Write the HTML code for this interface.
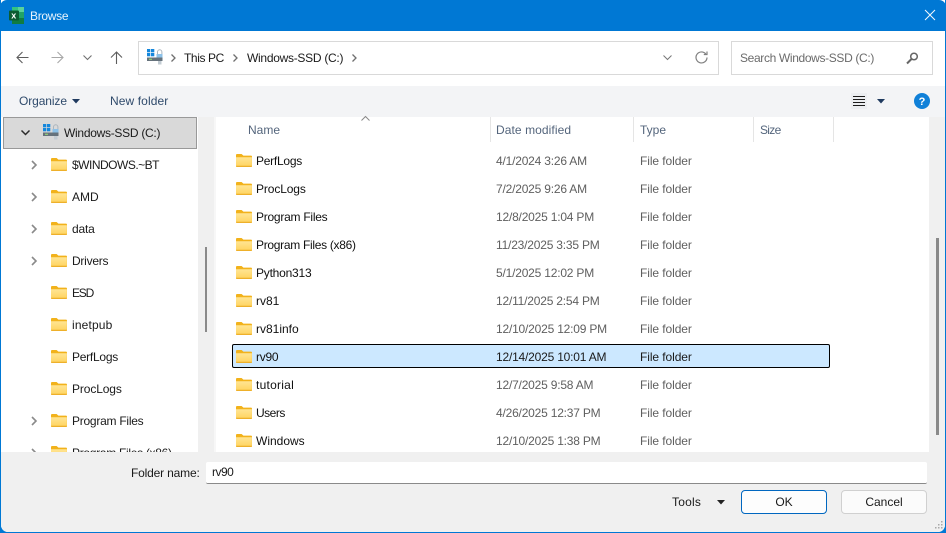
<!DOCTYPE html>
<html><head><meta charset="utf-8"><style>
html,body{margin:0;padding:0;width:946px;height:533px;overflow:hidden;background:#0078d4}
*{box-sizing:border-box}
#w{position:absolute;left:0;top:0;width:946px;height:533px;overflow:hidden;font:12px "Liberation Sans",sans-serif;color:#1a1a1a}
.a,.t,.n,.d,.y{position:absolute}
.t,.n,.d,.y{white-space:nowrap;line-height:16px}
.n{left:256px;color:#101010}
.d{left:496px;color:#5f5f5f;letter-spacing:-.2px}
.y{left:640px;color:#5f5f5f;letter-spacing:-.08px}
.h{color:#54657c}
svg{position:absolute;overflow:visible}
</style></head><body><div id="w">
<svg width="0" height="0" style="position:absolute"><defs>
<linearGradient id="fg" x1="0" y1="0" x2="0" y2="1"><stop offset="0" stop-color="#ffe594"/><stop offset="1" stop-color="#ffd35e"/></linearGradient>
<symbol id="fo" viewBox="0 0 16 14"><path d="M0 2a1 1 0 0 1 1-1h4.600l1.800 1.600H15a1 1 0 0 1 1 1V13a1 1 0 0 1-1 1H1a1 1 0 0 1-1-1z" fill="#f2b21b"/><path d="M0 4.200h15.900V13a1 1 0 0 1-1 .9H1a1 1 0 0 1-1-.9z" fill="url(#fg)"/><path d="M0 12.800h16V13a1 1 0 0 1-1 1H1a1 1 0 0 1-1-1z" fill="#eeb02a"/></symbol>
<symbol id="dr" viewBox="0 0 16 16"><rect x="0" y="0" width="3.300" height="3.300" fill="#1487dc"/><rect x="4" y="0" width="3.300" height="3.300" fill="#1487dc"/><rect x="0" y="4" width="3.300" height="3.300" fill="#1487dc"/><rect x="4" y="4" width="3.300" height="3.300" fill="#1487dc"/><rect x="0" y="8.500" width="15.500" height="3.500" fill="#66727c"/><rect x="2" y="9.700" width="3" height="1.200" fill="#8fd07a"/><path d="M10.500 5.500V3a2.200 2.200 0 0 1 4.400 0v2.500" fill="none" stroke="#aab5be" stroke-width="1"/><rect x="9.500" y="5" width="6" height="3.500" fill="#8cc1e8"/><rect x="11" y="12" width="3.500" height="3.500" fill="#c3ccd3"/></symbol>
<symbol id="ch" viewBox="0 0 8 12"><path d="M2 2l4 4-4 4" fill="none" stroke="#8a8a8a" stroke-width="1.600"/></symbol>
<symbol id="cs" viewBox="0 0 8 12"><path d="M2.500 2.500l3.500 3.500-3.500 3.500" fill="none" stroke="#6f6f6f" stroke-width="1.300"/></symbol>
</defs></svg>

<!-- frame -->
<div class="a" style="left:1px;top:0;width:944px;height:532px;background:#fff;border-radius:0 0 7px 7px"></div>
<div class="a" style="left:0;top:0;width:946px;height:31px;background:#0078d4;border-radius:7px 7px 0 0"></div>

<!-- title -->
<svg style="left:9px;top:7px" width="15" height="17" viewBox="0 0 15 17"><rect x="3" y="0" width="6" height="5" fill="#33c481"/><rect x="9" y="0" width="6" height="5" fill="#5ad29a"/><rect x="3" y="5" width="12" height="6" fill="#21a366"/><rect x="3" y="11" width="12" height="6" fill="#107c41"/><rect x="0" y="3.500" width="10" height="10" rx="1" fill="#0b5c30"/><text x="2.300" y="11.500" font-size="9" font-weight="bold" fill="#fff" font-family="Liberation Sans">x</text></svg>
<div class="t" style="left:30px;top:8px;color:#e8f3fc;letter-spacing:-.3px">Browse</div>
<svg style="left:925px;top:10px" width="10" height="10"><path d="M0 0l10 10M10 0L0 10" stroke="#f4f9fd" stroke-width="1"/></svg>

<!-- nav row -->
<svg style="left:16px;top:51px" width="13" height="13" fill="none" stroke="#5d5d5d" stroke-width="1.100"><path d="M12.500 6.500H1M6.500 1L1 6.500 6.500 12"/></svg>
<svg style="left:51px;top:51px" width="13" height="13" fill="none" stroke="#a8a8a8" stroke-width="1.100"><path d="M.5 6.500H12M6.500 1L12 6.500 6.500 12"/></svg>
<svg style="left:83px;top:55px" width="9" height="6" fill="none" stroke="#707070" stroke-width="1.100"><path d="M.5.5l4 4 4-4"/></svg>
<svg style="left:110px;top:51px" width="13" height="13" fill="none" stroke="#5d5d5d" stroke-width="1.100"><path d="M6.500 13V1M1 6.500L6.500 1 12 6.500"/></svg>

<div class="a" style="left:138px;top:41px;width:581px;height:34px;border:1px solid #d9d9d9;background:#fff"></div>
<svg style="left:147px;top:49px" width="16" height="16"><use href="#dr" width="16" height="16"/></svg>
<svg style="left:169px;top:52px" width="8" height="12"><use href="#cs" width="8" height="12"/></svg>
<div class="t" style="left:184px;top:50px;letter-spacing:-.4px">This PC</div>
<svg style="left:231px;top:52px" width="8" height="12"><use href="#cs" width="8" height="12"/></svg>
<div class="t" style="left:247px;top:50px;letter-spacing:-.28px">Windows-SSD (C:)</div>
<svg style="left:350px;top:52px" width="8" height="12"><use href="#cs" width="8" height="12"/></svg>
<svg style="left:663px;top:55px" width="9" height="6" fill="none" stroke="#777" stroke-width="1"><path d="M.5.5l4 4 4-4"/></svg>
<svg style="left:695px;top:51px" width="13" height="13" fill="none" stroke="#808080" stroke-width="1.200"><path d="M10.800 3A5.500 5.500 0 1 0 12 6.500M12 .5V3.500H8.800"/></svg>

<div class="a" style="left:731px;top:41px;width:202px;height:34px;border:1px solid #d9d9d9;background:#fff"></div>
<div class="t" style="left:740px;top:50px;color:#6b6b6b;letter-spacing:-.35px">Search Windows-SSD (C:)</div>
<svg style="left:906px;top:52px" width="13" height="13" fill="none" stroke="#666"><circle cx="8" cy="4.500" r="3.300" stroke-width="1.500"/><path d="M5.500 7L1 11.500" stroke-width="2"/></svg>

<!-- toolbar -->
<div class="a" style="left:1px;top:86px;width:944px;height:31px;background:#f3f4f6"></div>
<div class="t" style="left:19px;top:93px;color:#2f4a6b;letter-spacing:-.1px">Organize</div>
<svg style="left:72px;top:99px" width="8" height="5"><path d="M0 0h8L4 4.500z" fill="#1f3a5f"/></svg>
<div class="t" style="left:110px;top:93px;color:#2f4a6b;letter-spacing:.1px">New folder</div>
<div class="a" style="left:851px;top:93px;width:16px;height:16px;background:#eceef1"></div>
<svg style="left:853px;top:96px" width="12" height="10"><path d="M0 .5h12M0 3.500h12M0 6.500h12M0 9.500h12" stroke="#1c1c1c" stroke-width="1"/></svg>
<svg style="left:877px;top:99px" width="8" height="5"><path d="M0 0h8L4 4.500z" fill="#1f3a5f"/></svg>
<svg style="left:914px;top:93px" width="16" height="16"><circle cx="8" cy="8" r="8" fill="#1080d8"/><text x="8" y="12" text-anchor="middle" font-size="11" font-weight="bold" fill="#fff" font-family="Liberation Sans">?</text></svg>

<!-- nav pane -->
<div class="a" style="left:198px;top:117px;width:16px;height:335px;background:#f0f0f0"></div>
<div class="a" style="left:214px;top:117px;width:2px;height:335px;background:#f7f7f7"></div>
<div class="a" style="left:205px;top:247px;width:2px;height:85px;background:#8a8a8a"></div>
<div class="a" style="left:3px;top:117px;width:194px;height:32px;background:#d9d9d9;border:1px solid #999"></div>
<svg style="left:21px;top:130px" width="9" height="6" fill="none" stroke="#2a2a2a" stroke-width="1.500"><path d="M.5.500l4 4 4-4"/></svg>
<svg style="left:43px;top:124px" width="16" height="16"><use href="#dr" width="16" height="16"/></svg>
<div class="t" style="left:64px;top:125px;letter-spacing:-.28px">Windows-SSD (C:)</div>

<svg style="left:30px;top:159px" width="8" height="12"><use href="#ch" width="8" height="12"/></svg>
<svg style="left:51px;top:157px" width="16" height="14"><use href="#fo" width="16" height="14"/></svg><div class="t" style="left:72px;top:157px;letter-spacing:-.5px">$WINDOWS.~BT</div>
<svg style="left:30px;top:191px" width="8" height="12"><use href="#ch" width="8" height="12"/></svg>
<svg style="left:51px;top:189px" width="16" height="14"><use href="#fo" width="16" height="14"/></svg><div class="t" style="left:72px;top:189px">AMD</div>
<svg style="left:30px;top:223px" width="8" height="12"><use href="#ch" width="8" height="12"/></svg>
<svg style="left:51px;top:221px" width="16" height="14"><use href="#fo" width="16" height="14"/></svg><div class="t" style="left:72px;top:221px;letter-spacing:-.2px">data</div>
<svg style="left:30px;top:255px" width="8" height="12"><use href="#ch" width="8" height="12"/></svg>
<svg style="left:51px;top:253px" width="16" height="14"><use href="#fo" width="16" height="14"/></svg><div class="t" style="left:72px;top:253px;letter-spacing:-.25px">Drivers</div>
<svg style="left:51px;top:285px" width="16" height="14"><use href="#fo" width="16" height="14"/></svg><div class="t" style="left:72px;top:285px;letter-spacing:-1.200px">ESD</div>
<svg style="left:51px;top:317px" width="16" height="14"><use href="#fo" width="16" height="14"/></svg><div class="t" style="left:72px;top:317px;letter-spacing:.15px">inetpub</div>
<svg style="left:51px;top:349px" width="16" height="14"><use href="#fo" width="16" height="14"/></svg><div class="t" style="left:72px;top:349px;letter-spacing:-.25px">PerfLogs</div>
<svg style="left:51px;top:381px" width="16" height="14"><use href="#fo" width="16" height="14"/></svg><div class="t" style="left:72px;top:381px;letter-spacing:-.12px">ProcLogs</div>
<svg style="left:30px;top:415px" width="8" height="12"><use href="#ch" width="8" height="12"/></svg>
<svg style="left:51px;top:413px" width="16" height="14"><use href="#fo" width="16" height="14"/></svg><div class="t" style="left:72px;top:413px;letter-spacing:-.25px">Program Files</div>
<svg style="left:30px;top:447px" width="8" height="12"><use href="#ch" width="8" height="12"/></svg>
<svg style="left:51px;top:445px" width="16" height="14"><use href="#fo" width="16" height="14"/></svg><div class="t" style="left:72px;top:445px;letter-spacing:-.3px">Program Files (x86)</div>

<!-- list header -->
<div class="t h" style="left:248px;top:122px">Name</div>
<svg style="left:361px;top:116px" width="9" height="5" fill="none" stroke="#888"><path d="M.5 4.500l4-4 4 4"/></svg>
<div class="t h" style="left:496px;top:122px;letter-spacing:.08px">Date modified</div>
<div class="t h" style="left:640px;top:122px">Type</div>
<div class="t h" style="left:760px;top:122px;letter-spacing:-.7px">Size</div>
<div class="a" style="left:490px;top:117px;width:1px;height:25px;background:#e5e5e5"></div>
<div class="a" style="left:633px;top:117px;width:1px;height:25px;background:#e5e5e5"></div>
<div class="a" style="left:753px;top:117px;width:1px;height:25px;background:#e5e5e5"></div>
<div class="a" style="left:833px;top:117px;width:1px;height:25px;background:#e5e5e5"></div>

<!-- selected -->
<div class="a" style="left:232px;top:344px;width:598px;height:24px;background:#cce8ff;border:1px solid #000;border-radius:2px"></div>

<!-- rows -->
<svg style="left:236px;top:153px" width="16" height="14"><use href="#fo" width="16" height="14"/></svg><div class="n" style="top:153px;letter-spacing:-.25px">PerfLogs</div><div class="d" style="top:153px">4/1/2024 3:26 AM</div><div class="y" style="top:153px">File folder</div>
<svg style="left:236px;top:181px" width="16" height="14"><use href="#fo" width="16" height="14"/></svg><div class="n" style="top:181px;letter-spacing:-.12px">ProcLogs</div><div class="d" style="top:181px">7/2/2025 9:26 AM</div><div class="y" style="top:181px">File folder</div>
<svg style="left:236px;top:209px" width="16" height="14"><use href="#fo" width="16" height="14"/></svg><div class="n" style="top:209px;letter-spacing:-.25px">Program Files</div><div class="d" style="top:209px">12/8/2025 1:04 PM</div><div class="y" style="top:209px">File folder</div>
<svg style="left:236px;top:237px" width="16" height="14"><use href="#fo" width="16" height="14"/></svg><div class="n" style="top:237px;letter-spacing:-.3px">Program Files (x86)</div><div class="d" style="top:237px">11/23/2025 3:35 PM</div><div class="y" style="top:237px">File folder</div>
<svg style="left:236px;top:265px" width="16" height="14"><use href="#fo" width="16" height="14"/></svg><div class="n" style="top:265px;letter-spacing:-.22px">Python313</div><div class="d" style="top:265px">5/1/2025 12:02 PM</div><div class="y" style="top:265px">File folder</div>
<svg style="left:236px;top:293px" width="16" height="14"><use href="#fo" width="16" height="14"/></svg><div class="n" style="top:293px">rv81</div><div class="d" style="top:293px">12/11/2025 2:54 PM</div><div class="y" style="top:293px">File folder</div>
<svg style="left:236px;top:321px" width="16" height="14"><use href="#fo" width="16" height="14"/></svg><div class="n" style="top:321px">rv81info</div><div class="d" style="top:321px">12/10/2025 12:09 PM</div><div class="y" style="top:321px">File folder</div>
<svg style="left:236px;top:349px" width="16" height="14"><use href="#fo" width="16" height="14"/></svg><div class="n" style="top:349px;letter-spacing:-.25px">rv90</div><div class="d" style="top:349px;color:#1a1a1a">12/14/2025 10:01 AM</div><div class="y" style="top:349px;color:#1a1a1a">File folder</div>
<svg style="left:236px;top:377px" width="16" height="14"><use href="#fo" width="16" height="14"/></svg><div class="n" style="top:377px;letter-spacing:.25px">tutorial</div><div class="d" style="top:377px">12/7/2025 9:58 AM</div><div class="y" style="top:377px">File folder</div>
<svg style="left:236px;top:405px" width="16" height="14"><use href="#fo" width="16" height="14"/></svg><div class="n" style="top:405px;letter-spacing:-.5px">Users</div><div class="d" style="top:405px">4/26/2025 12:37 PM</div><div class="y" style="top:405px">File folder</div>
<svg style="left:236px;top:433px" width="16" height="14"><use href="#fo" width="16" height="14"/></svg><div class="n" style="top:433px">Windows</div><div class="d" style="top:433px">12/10/2025 1:38 PM</div><div class="y" style="top:433px">File folder</div>

<!-- list scrollbar -->
<div class="a" style="left:929px;top:117px;width:16px;height:335px;background:#f0f0f0"></div>
<div class="a" style="left:936px;top:238px;width:3px;height:197px;background:#8a8a8a"></div>

<!-- bottom -->
<div class="a" style="left:1px;top:452px;width:944px;height:80px;background:#f0f0f0;border-radius:0 0 7px 7px"></div>
<div class="t" style="left:131px;top:465px;letter-spacing:-.17px">Folder name:</div>
<div class="a" style="left:206px;top:462px;width:721px;height:22px;background:#fff;border-bottom:1px solid #8a8a8a;border-radius:2px"></div>
<div class="t" style="left:212px;top:464px;letter-spacing:-.5px">rv90</div>
<div class="t" style="left:672px;top:494px;letter-spacing:.2px">Tools</div>
<svg style="left:717px;top:500px" width="8" height="5"><path d="M0 0h8L4 4.500z" fill="#222"/></svg>
<div class="a" style="left:741px;top:490px;width:86px;height:24px;background:#fdfdfd;border:1px solid #0067c0;border-radius:4px;text-align:center;line-height:22px">OK</div>
<div class="a" style="left:841px;top:490px;width:86px;height:24px;background:#fbfbfb;border:1px solid #d0d0d0;border-radius:4px;text-align:center;line-height:22px">Cancel</div>
<svg style="left:934px;top:520px" width="10" height="10" fill="#a8a8a8"><rect x="7" y="1" width="1.500" height="1.500"/><rect x="4" y="4" width="1.500" height="1.500"/><rect x="7" y="4" width="1.500" height="1.500"/><rect x="1" y="7" width="1.500" height="1.500"/><rect x="4" y="7" width="1.500" height="1.500"/><rect x="7" y="7" width="1.500" height="1.500"/></svg>
</div></body></html>
